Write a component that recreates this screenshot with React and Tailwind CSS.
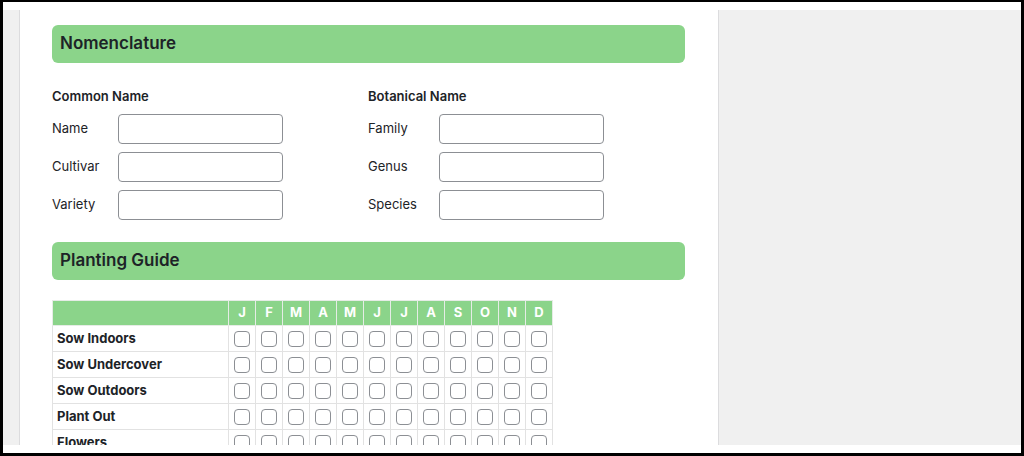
const months = ["J", "F", "M", "A", "M", "J", "J", "A", "S", "O", "N", "D"];

const stages = ["Sow Indoors", "Sow Undercover", "Sow Outdoors", "Plant Out", "Flowers"];

const commonFields = ["Name", "Cultivar", "Variety"];
const botanicalFields = ["Family", "Genus", "Species"];

function SectionBar({ title }) {
  return (
    <div className="h-[38px] rounded-[6px] bg-[#8bd48a] px-2 flex items-center">
      <h2 className="text-[17px] font-semibold text-[#1d2327]">{title}</h2>
    </div>
  );
}

function FieldGroup({ heading, fields, labelWidth }) {
  return (
    <div className="flex flex-col">
      <h3 className="text-[13px] font-semibold text-[#1d2327] leading-4 mb-[10px]">{heading}</h3>
      <div className="flex flex-col gap-2">
        {fields.map((field) => (
          <div key={field} className="flex items-center">
            <label className="text-[13px] text-[#1d2327]" style={{ width: labelWidth }}>
              {field}
            </label>
            <input
              type="text"
              className="w-[165px] h-[30px] rounded-[4px] border border-[#8c8f94] bg-white px-2 text-[13px] outline-none"
            />
          </div>
        ))}
      </div>
    </div>
  );
}

function PlantingTable() {
  return (
    <table className="border-collapse text-[13px] text-[#1d2327]">
      <thead>
        <tr className="bg-[#8bd48a] h-[25px]">
          <th className="w-[176px] border border-[#e6ece6] p-0"></th>
          {months.map((m, i) => (
            <th key={i} className="w-[27px] border border-[#e6ece6] p-0 text-center font-bold text-white">
              {m}
            </th>
          ))}
        </tr>
      </thead>
      <tbody>
        {stages.map((stage) => (
          <tr key={stage} className="h-[26px]">
            <td className="border border-[#e2e2e2] pl-1 font-bold">{stage}</td>
            {months.map((_, i) => (
              <td key={i} className="border border-[#e2e2e2] p-0">
                <div className="flex justify-center">
                  <span className="block w-4 h-4 rounded-[4px] border border-[#8c8f94] bg-white"></span>
                </div>
              </td>
            ))}
          </tr>
        ))}
      </tbody>
    </table>
  );
}

export default function App() {
  return (
    <div
      className="w-[1024px] h-[456px] bg-white border-black border-t-2 border-l-[3px] border-r-[3px] border-b-[3px] pt-2 pb-2 flex overflow-hidden"
      style={{ fontFamily: "Inter, 'Liberation Sans', sans-serif" }}
    >
      {/* Left admin strip */}
      <div className="w-[17px] bg-[#f0f0f0] border-r border-[#dcdcde]"></div>

      {/* Main content */}
      <main className="w-[698px] bg-white pt-[15px] pl-8 pr-[33px] overflow-hidden">
        <SectionBar title="Nomenclature" />

        <div className="flex mt-[25px]">
          <div className="w-[316px]">
            <FieldGroup heading="Common Name" fields={commonFields} labelWidth={66} />
          </div>
          <div>
            <FieldGroup heading="Botanical Name" fields={botanicalFields} labelWidth={71} />
          </div>
        </div>

        <div className="mt-[22px]">
          <SectionBar title="Planting Guide" />
        </div>

        <div className="mt-5">
          <PlantingTable />
        </div>
      </main>

      {/* Right sidebar */}
      <aside className="flex-1 bg-[#f0f0f0] border-l border-[#dcdcde]"></aside>
    </div>
  );
}
